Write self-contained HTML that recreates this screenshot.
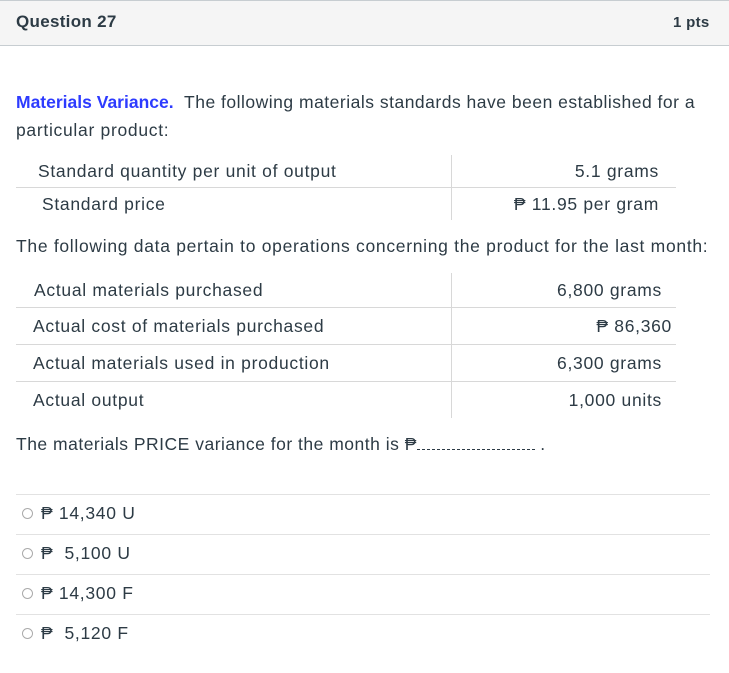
<!DOCTYPE html>
<html><head><style>
body{margin:0;width:729px;height:673px;background:#fff;position:relative;overflow:hidden;font-family:"Liberation Sans",sans-serif;color:#2d3b45;}
.t{position:absolute;white-space:nowrap;font-size:17.5px;line-height:20px;letter-spacing:0.7px}
.r{text-align:right}
.hl{position:absolute;height:1px;background:#d8d8d8}
.vl{position:absolute;width:1px;background:#d8d8d8}
.rad{position:absolute;width:9px;height:9px;border:1px solid #aaa;border-radius:50%;left:22px}
</style></head><body>
<div style="position:absolute;left:0;top:0;width:729px;height:44px;background:#f5f5f5;border-top:1px solid #c7cdd1;border-bottom:1px solid #c7cdd1"></div>
<div class="t" style="left:16px;top:12px;font-weight:bold;font-size:17px;letter-spacing:0.3px">Question 27</div>
<div class="t" style="left:673px;top:13px;font-weight:bold;font-size:15px;letter-spacing:0.3px">1 pts</div>

<div class="t" style="left:16px;top:92px;letter-spacing:0.5px"><span style="color:#2d3bff;font-weight:bold;letter-spacing:0">Materials Variance.</span>&nbsp; The following materials standards have been established for a</div>
<div class="t" style="left:16px;top:120px">particular product:</div>

<div class="vl" style="left:451px;top:155px;height:65px"></div>
<div class="hl" style="left:16px;top:187px;width:660px"></div>
<div class="t" style="left:38px;top:161px">Standard quantity per unit of output</div>
<div class="t r" style="right:70px;top:161px">5.1 grams</div>
<div class="t" style="left:42px;top:194px">Standard price</div>
<div class="t r" style="right:70px;top:194px">₱ 11.95 per gram</div>

<div class="t" style="left:16px;top:236px">The following data pertain to operations concerning the product for the last month:</div>

<div class="vl" style="left:451px;top:273px;height:145px"></div>
<div class="hl" style="left:16px;top:307px;width:660px"></div>
<div class="hl" style="left:16px;top:344px;width:660px"></div>
<div class="hl" style="left:16px;top:381px;width:660px"></div>
<div class="t" style="left:34px;top:280px">Actual materials purchased</div>
<div class="t r" style="right:67px;top:280px">6,800 grams</div>
<div class="t" style="left:33px;top:316px">Actual cost of materials purchased</div>
<div class="t r" style="right:57px;top:316px">₱ 86,360</div>
<div class="t" style="left:33px;top:353px">Actual materials used in production</div>
<div class="t r" style="right:67px;top:353px">6,300 grams</div>
<div class="t" style="left:33px;top:390px">Actual output</div>
<div class="t r" style="right:67px;top:390px">1,000 units</div>

<div class="t" style="left:16px;top:434px;letter-spacing:0.5px">The materials PRICE variance for the month is ₱<span style="display:inline-block;width:118px;height:14px;border-bottom:1px dashed #2d3b45;vertical-align:baseline"></span> .</div>

<div class="hl" style="left:16px;top:494px;width:694px;background:#e2e2e2"></div>
<div class="hl" style="left:16px;top:534px;width:694px;background:#e2e2e2"></div>
<div class="hl" style="left:16px;top:574px;width:694px;background:#e2e2e2"></div>
<div class="hl" style="left:16px;top:614px;width:694px;background:#e2e2e2"></div>
<div class="rad" style="top:508px"></div>
<div class="rad" style="top:548px"></div>
<div class="rad" style="top:588px"></div>
<div class="rad" style="top:628px"></div>
<div class="t" style="left:41px;top:503px">₱ 14,340 U</div>
<div class="t" style="left:41px;top:543px">₱&nbsp;&nbsp;5,100 U</div>
<div class="t" style="left:41px;top:583px">₱ 14,300 F</div>
<div class="t" style="left:41px;top:623px">₱&nbsp;&nbsp;5,120 F</div>
</body></html>
